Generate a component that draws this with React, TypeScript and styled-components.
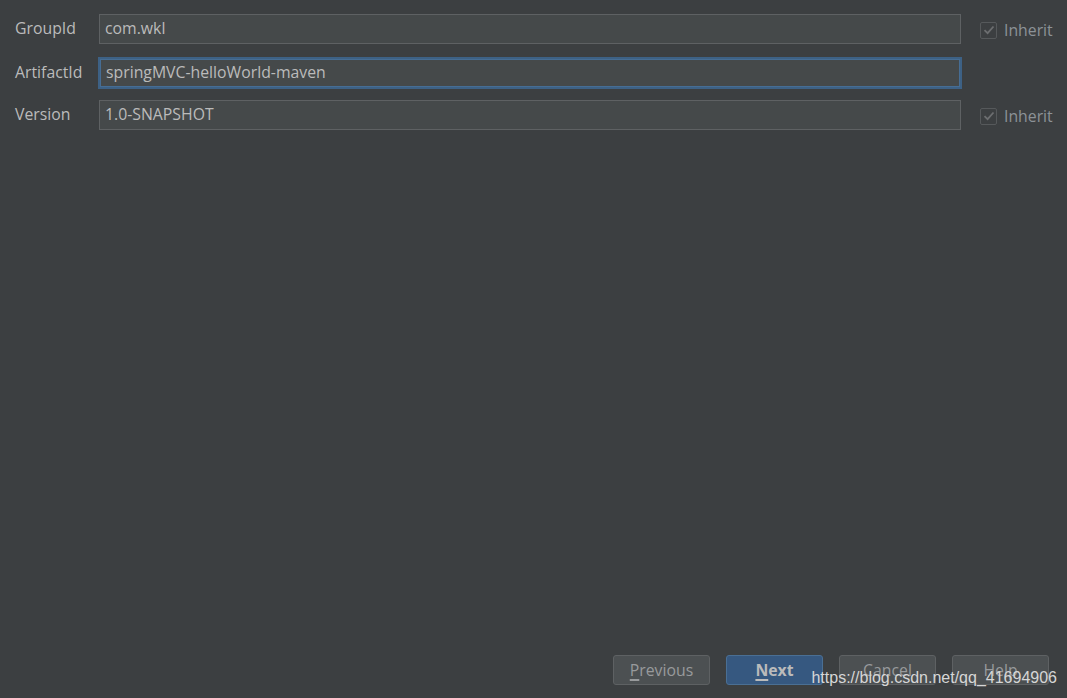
import styled, { createGlobalStyle } from 'styled-components';

const GlobalStyle = createGlobalStyle`
  html, body {
    margin: 0;
    padding: 0;
    background: #3c3f41;
  }
  body {
    font-family: 'Open Sans', 'Noto Sans', sans-serif;
    color: #bbbbbb;
  }
`;

interface FieldProps {
  label: string;
  value: string;
  focused?: boolean;
  inherit?: boolean;
}

const Field = ({ label, value, focused, inherit }: FieldProps) => {
  return (
    <FieldRow>
      <Label>{label}</Label>
      <Input focused={focused}>{value}</Input>
      <InheritCell>
        {inherit && (
          <>
            <CheckBox>
              <svg width="12" height="10" viewBox="0 0 12 10">
                <path d="M1.5 5.2 L4.6 8.2 L10.5 1.5" fill="none" stroke="#6c6e70" strokeWidth="1.8" />
              </svg>
            </CheckBox>
            <InheritText>Inherit</InheritText>
          </>
        )}
      </InheritCell>
    </FieldRow>
  );
};

const App = () => {
  return (
    <>
      <GlobalStyle />
      <Page>
        <Form>
          <Field label="GroupId" value="com.wkl" inherit />
          <Field label="ArtifactId" value="springMVC-helloWorld-maven" focused />
          <Field label="Version" value="1.0-SNAPSHOT" inherit />
        </Form>
        <Footer>
          <Button>
            <u>P</u>revious
          </Button>
          <Button primary>
            <u>N</u>ext
          </Button>
          <Button>Cancel</Button>
          <Button>Help</Button>
          <Watermark>https://blog.csdn.net/qq_41694906</Watermark>
        </Footer>
      </Page>
    </>
  );
};

export default App;

const Page = styled.div`
  width: 1067px;
  height: 698px;
  display: flex;
  flex-direction: column;
  justify-content: space-between;
  box-sizing: border-box;
  padding: 14px 0 13px 0;
`;

const Form = styled.div`
  display: flex;
  flex-direction: column;
  gap: 13px;
`;

const FieldRow = styled.div`
  display: grid;
  grid-template-columns: 99px 862px 106px;
  align-items: center;
  height: 30px;
`;

const Label = styled.span`
  padding-left: 15px;
  padding-bottom: 2px;
  font-size: 15.8px;
  color: #bbbbbb;
`;

const Input = styled.div<{ focused?: boolean }>`
  box-sizing: border-box;
  height: 30px;
  display: flex;
  align-items: center;
  padding-left: 5px;
  padding-bottom: 2px;
  font-size: 15.8px;
  color: #bbbbbb;
  background: #45494a;
  border: 1px solid #5e6163;
  ${({ focused }) =>
    focused &&
    `
    margin: 0 -1px;
    height: 32px;
    padding-left: 6px;
    border: 2px solid #3d6185;
    box-shadow: inset 0 0 0 1px #466d94;
  `}
`;

const InheritCell = styled.div`
  display: flex;
  align-items: center;
  gap: 7px;
  padding-left: 19px;
  padding-top: 2px;
`;

const CheckBox = styled.span`
  box-sizing: border-box;
  width: 17px;
  height: 17px;
  border: 1px solid #56595b;
  border-radius: 2px;
  background: #3c3f41;
  display: flex;
  align-items: center;
  justify-content: center;
`;

const InheritText = styled.span`
  font-size: 15.8px;
  color: #8c9297;
`;

const Footer = styled.div`
  position: relative;
  display: flex;
  justify-content: flex-end;
  gap: 16px;
  padding-right: 18px;
`;

const Button = styled.div<{ primary?: boolean }>`
  box-sizing: border-box;
  width: 97px;
  height: 30px;
  border-radius: 3px;
  display: flex;
  align-items: center;
  justify-content: center;
  padding-bottom: 1px;
  font-size: 15.8px;
  color: ${({ primary }) => (primary ? '#bbbbbb' : '#989a9c')};
  font-weight: ${({ primary }) => (primary ? 700 : 400)};
  background: ${({ primary }) => (primary ? '#365880' : '#4c5052')};
  border: 1px solid ${({ primary }) => (primary ? '#4a6f94' : '#5e6163')};

  u {
    text-decoration-thickness: 2px;
    text-underline-offset: 3px;
  }
`;

const Watermark = styled.span`
  position: absolute;
  right: 10px;
  bottom: -2px;
  font-family: 'Liberation Sans', Arial, sans-serif;
  font-size: 16px;
  color: #d6d6d6;
  pointer-events: none;
`;
